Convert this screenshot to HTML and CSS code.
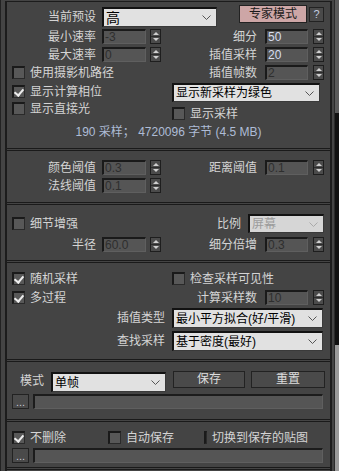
FILE: index.html
```html
<!DOCTYPE html>
<html>
<head>
<meta charset="utf-8">
<title>发光贴图</title>
<link rel="stylesheet" href="styles.css">
</head>
<body>
<div class="wrap">
	<div class="edge"></div>
	<div class="roll">
		<!-- 基本参数 -->
		<div class="sec s1">
			<div class="row rowA">
				<span class="lbl top5">当前预设</span>
				<div class="dd dd-pre"><span class="big">高</span><svg width="9" height="5"><polyline points="0.5,0.5 4.5,4.5 8.5,0.5" fill="none" stroke="#555"/></svg></div>
				<a class="btn pink" href="###">专家模式</a>
				<a class="btn help" href="###">?</a>
			</div>
			<div class="row mt2">
				<span class="lbl">最小速率</span><span class="num off">-3</span><span class="spin"></span>
				<span class="rlbl">细分</span><span class="num r">50</span><span class="spin r"></span>
			</div>
			<div class="row mt3">
				<span class="lbl">最大速率</span><span class="num off">0</span><span class="spin"></span>
				<span class="rlbl">插值采样</span><span class="num r">20</span><span class="spin r"></span>
			</div>
			<div class="row mt3">
				<div class="half"><div class="chk"><span class="cb"></span>使用摄影机路径</div></div>
				<span class="rlbl">插值帧数</span><span class="num r off">2</span><span class="spin r"></span>
			</div>
			<div class="pair mt3">
				<div class="col-l">
					<div class="chk mt2"><span class="cb on"></span>显示计算相位</div>
					<div class="chk mt4"><span class="cb"></span>显示直接光</div>
				</div>
				<div class="col-r">
					<div class="dd dd-show">显示新采样为绿色<svg width="9" height="5"><polyline points="0.5,0.5 4.5,4.5 8.5,0.5" fill="none" stroke="#555"/></svg></div>
					<div class="chk mt5"><span class="cb"></span>显示采样</div>
				</div>
			</div>
			<div class="info">190 采样； 4720096 字节 (4.5 MB)</div>
		</div>
		<div class="sep"></div>
		<!-- 阈值 -->
		<div class="sec s2">
			<div class="row">
				<span class="lbl">颜色阈值</span><span class="num off">0.3</span><span class="spin"></span>
				<span class="rlbl">距离阈值</span><span class="num r off">0.1</span><span class="spin r"></span>
			</div>
			<div class="row mt3">
				<span class="lbl">法线阈值</span><span class="num off">0.1</span><span class="spin"></span>
			</div>
		</div>
		<div class="sep"></div>
		<!-- 细节增强 -->
		<div class="sec s3">
			<div class="row h19">
				<div class="chk grow"><span class="cb"></span>细节增强</div>
				<span>比例</span>
				<div class="dd off dd-scale">屏幕<svg width="9" height="5"><polyline points="0.5,0.5 4.5,4.5 8.5,0.5" fill="none" stroke="#aaa"/></svg></div>
			</div>
			<div class="row mt4">
				<span class="lbl">半径</span><span class="num off">60.0</span><span class="spin"></span>
				<span class="rlbl">细分倍增</span><span class="num r off">0.3</span><span class="spin r"></span>
			</div>
		</div>
		<div class="sep"></div>
		<!-- 高级选项 -->
		<div class="sec s4">
			<div class="row h13">
				<div class="col-l"><div class="chk"><span class="cb on"></span>随机采样</div></div>
				<div class="chk"><span class="cb"></span>检查采样可见性</div>
			</div>
			<div class="row mt5">
				<div class="half"><div class="chk"><span class="cb on"></span>多过程</div></div>
				<span class="rlbl">计算采样数</span><span class="num r off">10</span><span class="spin r"></span>
			</div>
			<div class="row h20 mt3">
				<span class="lbl2">插值类型</span>
				<div class="dd dd-wide">最小平方拟合(好/平滑)<svg width="9" height="5"><polyline points="0.5,0.5 4.5,4.5 8.5,0.5" fill="none" stroke="#555"/></svg></div>
			</div>
			<div class="row h20 mt3">
				<span class="lbl2">查找采样</span>
				<div class="dd dd-wide">基于密度(最好)<svg width="9" height="5"><polyline points="0.5,0.5 4.5,4.5 8.5,0.5" fill="none" stroke="#555"/></svg></div>
			</div>
		</div>
		<div class="sep"></div>
		<!-- 模式 -->
		<div class="sec s5">
			<div class="row h21 top">
				<span class="mode-lbl">模式</span>
				<div class="dd dd-mode">单帧<svg width="9" height="5"><polyline points="0.5,0.5 4.5,4.5 8.5,0.5" fill="none" stroke="#555"/></svg></div>
				<a class="btn save" href="###">保存</a>
				<a class="btn reset" href="###">重置</a>
			</div>
			<div class="row mt2">
				<a class="btn dots" href="###">...</a>
				<span class="path"></span>
			</div>
		</div>
		<div class="sep"></div>
		<!-- 渲染结束时 -->
		<div class="sec s6">
			<div class="row h13">
				<div class="grp g1"><div class="chk"><span class="cb on"></span>不删除</div></div>
				<div class="grp g2"><div class="chk"><span class="cb"></span>自动保存</div></div>
				<div class="grp"><div class="chk"><span class="cb"></span>切换到保存的贴图</div></div>
			</div>
			<div class="row mt4">
				<a class="btn dots" href="###">...</a>
				<span class="path"></span>
			</div>
		</div>
		<div class="sep"></div>
	</div>
	<div class="gap"></div>
	<div class="edge2"></div>
	<div class="scroll"><div class="sa"></div><div class="sb"></div><div class="sc"></div></div>
</div>
</body>
</html>
```

FILE: styles.css
```css
*{margin:0;padding:0;box-sizing:border-box;}
a{text-decoration:none;}
body{width:339px;height:471px;background:#444;overflow:hidden;font:12px/14px "Liberation Sans","Noto Sans CJK SC",sans-serif;color:#d4d4d4;}
.wrap{display:flex;height:471px;}
.edge{width:1px;background:#222;margin-right:4px;}
.roll{width:327px;margin-top:1px;border-top:1px solid #1c1c1c;border-left:2px solid #1c1c1c;border-right:2px solid #1c1c1c;}
.gap{width:2px;}
.edge2{width:1px;background:#2a2a2a;}
.scroll{width:4px;display:flex;flex-direction:column;}
.scroll .sa{height:113px;background:#5a5a5a;}
.scroll .sb{height:232px;background:#111;}
.scroll .sc{flex:1;background:#9a9a9a;}

.sec{overflow:hidden;}
.s1{height:146px;padding-top:3px;}
.s2{height:51px;padding-top:9px;}
.s3{height:55px;padding-top:9px;}
.s4{height:96px;padding-top:9px;}
.s5{height:57px;padding-top:9px;}
.s6{height:45px;padding-top:9px;}
.sep{height:3px;border-top:1px solid #1a1a1a;border-bottom:1px solid #1a1a1a;}

.mt2{margin-top:2px;}
.mt3{margin-top:3px;}
.mt4{margin-top:4px;}
.mt5{margin-top:5px;}

.row{display:flex;align-items:center;height:15px;white-space:nowrap;}
.row.top{align-items:flex-start;}
.h13{height:13px;}
.h19{height:19px;}
.h20{height:20px;}
.h21{height:21px;}
.grow{flex:1;}

.lbl{width:89px;text-align:right;}
.rlbl{width:96px;text-align:right;}
.lbl2{width:158px;text-align:right;margin-right:7px;}

/* 数值框 + 微调按钮 */
.num{width:44px;height:15px;margin-left:6px;padding-left:1px;background:#555;border-top:2px solid #1a1a1a;border-left:2px solid #1a1a1a;border-right:1px solid #5f5f5f;border-bottom:1px solid #5f5f5f;font:12px/12px "Liberation Sans",sans-serif;color:#d6def0;}
.num.r{width:43px;margin-left:8px;}
.num.off{color:#2e2e2e;}
.spin{width:11px;height:15px;margin-left:4px;border:1px solid #1e1e1e;background:linear-gradient(#4b4b4b 6px,#2c2c2c 6px,#2c2c2c 7px,#4b4b4b 7px);display:flex;flex-direction:column;align-items:center;justify-content:space-around;}
.spin.r{margin-left:5px;}
.spin::before{content:"";border-left:3px solid transparent;border-right:3px solid transparent;border-bottom:3px solid #cfcfcf;}
.spin::after{content:"";border-left:3px solid transparent;border-right:3px solid transparent;border-top:3px solid #cfcfcf;}

/* 复选框 */
.chk{display:flex;align-items:center;height:13px;}
.cb{width:13px;height:13px;margin-right:5px;background:#585858;border:1px solid #2a2a2a;border-top:2px solid #1a1a1a;border-left:2px solid #1a1a1a;display:flex;align-items:center;justify-content:center;}
.cb.on::after{content:"";width:4px;height:7px;margin-top:-2px;border-right:2px solid #eee;border-bottom:2px solid #eee;transform:rotate(40deg);}
.half{width:154px;padding-left:5px;}
.col-l{width:165px;padding-left:5px;}
.s3 .grow{padding-left:5px;}
.pair{display:flex;height:37px;}

/* 下拉框 */
.dd{display:flex;align-items:center;justify-content:space-between;background:#e1e1e1;border:1px solid #3a3a3a;border-top:2px solid #121212;border-left:2px solid #121212;color:#000;padding:0 5px 0 2px;font-size:12px;}
.dd.off{background:#d6d6d6;color:#9c9c9c;}
.dd-pre{width:115px;height:20px;margin:2px 0 0 6px;}
.big{font-size:14px;}
.dd-show{width:148px;height:19px;}
.dd-scale{width:76px;height:19px;margin:0 6px 0 7px;}
.dd-wide{width:151px;height:20px;}
.dd-mode{width:115px;height:20px;margin:1px 0 0 7px;}

/* 按钮 */
.btn{display:block;height:17px;border:1px solid #222;background:#4a4a4a;color:#dcdcdc;text-align:center;line-height:15px;}
.pink{width:68px;height:18px;margin-left:22px;background:#cda6a6;color:#1a1a1a;line-height:16px;}
.help{width:15px;height:15px;margin:2px 0 0 2px;font-size:11px;line-height:13px;color:#c4cde0;}
.rowA{height:22px;align-items:flex-start;}
.top5{margin-top:5px;}
.mode-lbl{margin:3px 0 0 13px;}
.save{width:72px;margin-left:7px;}
.reset{width:74px;margin-left:6px;}
.dots{width:17px;height:15px;margin-left:5px;line-height:15px;font-size:11px;color:#c8c8d8;}
.path{width:290px;height:15px;margin-left:4px;background:#555;border-top:2px solid #1c1c1c;border-left:2px solid #1c1c1c;border-right:1px solid #5f5f5f;border-bottom:1px solid #5f5f5f;}

.grp{width:96px;}
.grp.g1{width:101px;padding-left:5px;}

.info{margin-top:5px;text-align:center;color:#aebcd6;}
```
